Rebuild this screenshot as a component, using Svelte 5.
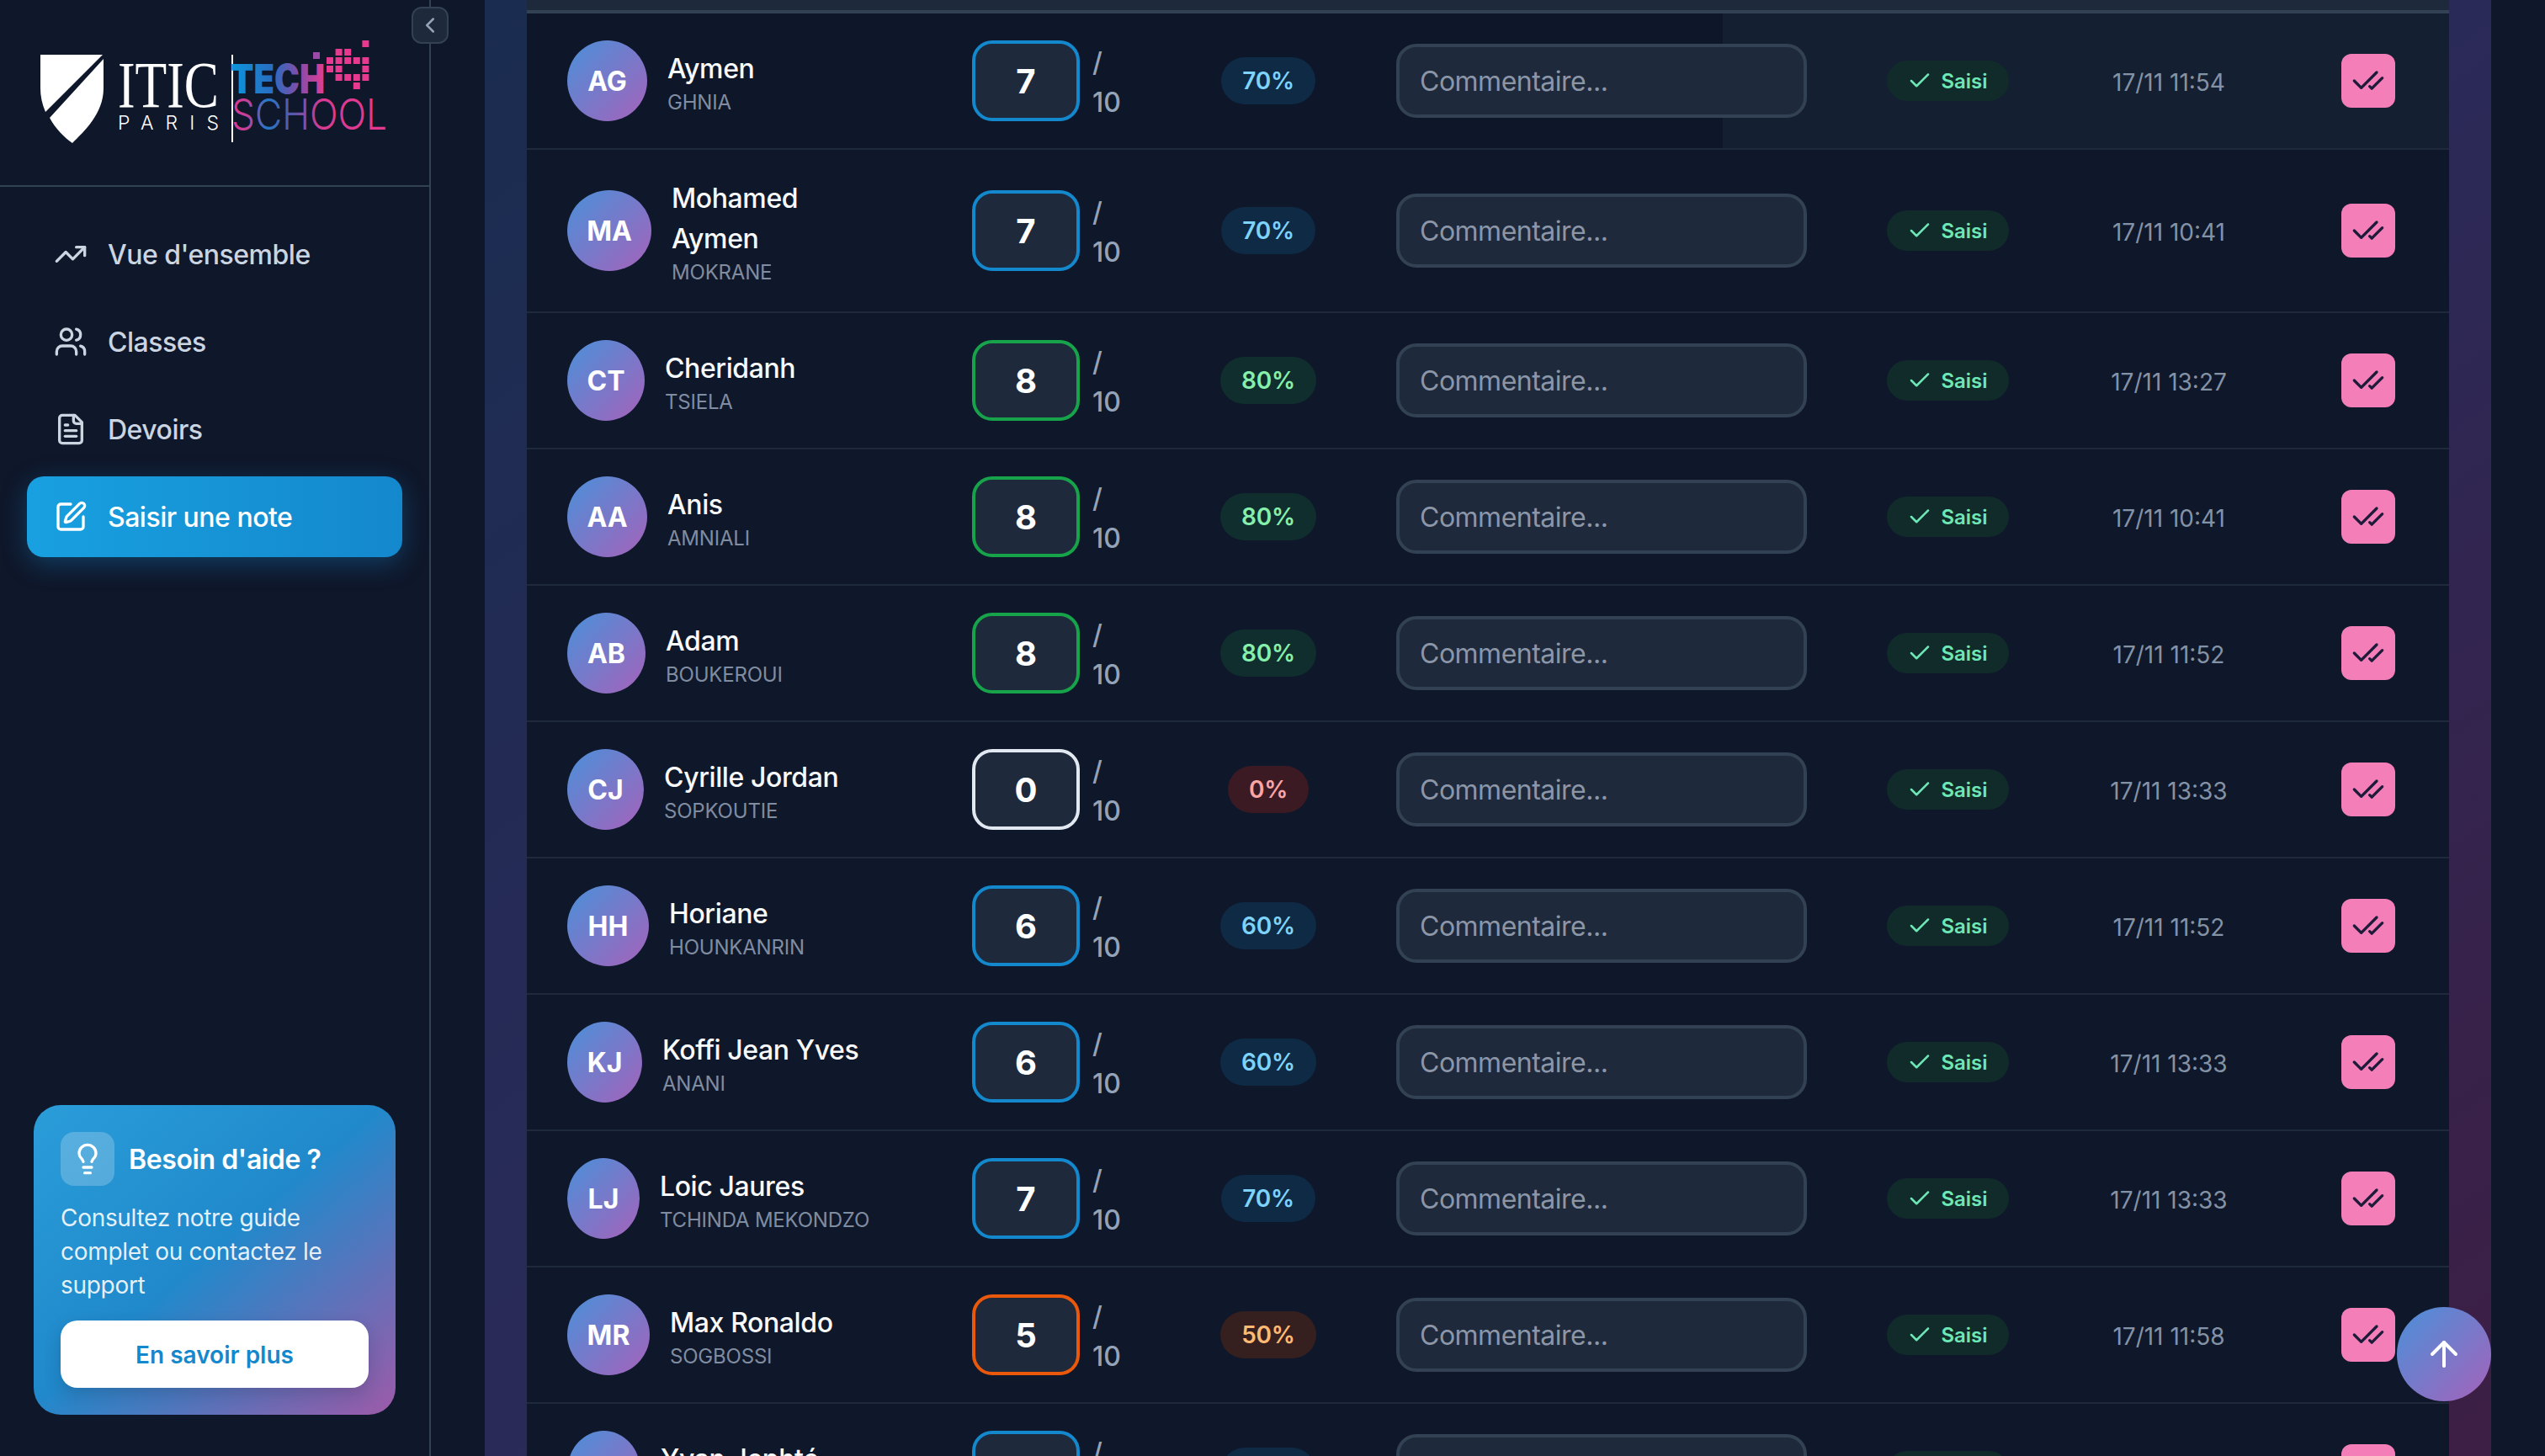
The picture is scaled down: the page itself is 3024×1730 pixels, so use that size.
<script>
	const nav = [
		{ label: "Vue d'ensemble", icon: 'trend' },
		{ label: 'Classes', icon: 'users' },
		{ label: 'Devoirs', icon: 'file' },
		{ label: 'Saisir une note', icon: 'pen', active: true }
	];

	const students = [
		{ ini: 'AG', first: 'Aymen', last: 'GHNIA', note: 7, w: 95, time: '17/11 11:54' },
		{ ini: 'MA', first: 'Mohamed Aymen', last: 'MOKRANE', note: 7, w: 100, time: '17/11 10:41' },
		{ ini: 'CT', first: 'Cheridanh', last: 'TSIELA', note: 8, w: 92, time: '17/11 13:27' },
		{ ini: 'AA', first: 'Anis', last: 'AMNIALI', note: 8, w: 95, time: '17/11 10:41' },
		{ ini: 'AB', first: 'Adam', last: 'BOUKEROUI', note: 8, w: 93, time: '17/11 11:52' },
		{ ini: 'CJ', first: 'Cyrille Jordan', last: 'SOPKOUTIE', note: 0, w: 91, time: '17/11 13:33' },
		{ ini: 'HH', first: 'Horiane', last: 'HOUNKANRIN', note: 6, w: 97, time: '17/11 11:52' },
		{ ini: 'KJ', first: 'Koffi Jean Yves', last: 'ANANI', note: 6, w: 89, time: '17/11 13:33' },
		{ ini: 'LJ', first: 'Loic Jaures', last: 'TCHINDA MEKONDZO', note: 7, w: 86, time: '17/11 13:33' },
		{ ini: 'MR', first: 'Max Ronaldo', last: 'SOGBOSSI', note: 5, w: 98, time: '17/11 11:58' },
		{ ini: 'YJ', first: 'Yvan Jephté', last: '\u00a0', note: 7, w: 87, time: '' }
	];

	const tone = (note) => {
		if (note >= 8) return 'good';
		if (note >= 6) return 'mid';
		if (note >= 5) return 'warn';
		return 'bad';
	};

	const pixels = [
		[4, 0],
		[1, 1], [2, 1],
		[0, 2], [1, 2], [2, 2], [3, 2], [4, 2],
		[0, 3], [1, 3], [4, 3],
		[1, 4], [2, 4], [3, 4], [4, 4],
		[3, 5]
	];
</script>

<div class="page">
	<aside>
		<button class="collapse" type="button" aria-label="Replier">
			<svg viewBox="0 0 24 24" width="30" height="30"><path d="m15 18-6-6 6-6" /></svg>
		</button>

		<div class="brand">
			<svg class="logo" viewBox="0 0 510 220" width="510" height="220">
				<defs>
					<linearGradient id="tech" gradientUnits="userSpaceOnUse" x1="276" y1="0" x2="385" y2="0">
						<stop offset="0" stop-color="#0c95dc" />
						<stop offset="0.45" stop-color="#2a6cc0" />
						<stop offset="0.75" stop-color="#8c4aa8" />
						<stop offset="1" stop-color="#e23c92" />
					</linearGradient>
					<linearGradient id="school" gradientUnits="userSpaceOnUse" x1="276" y1="0" x2="459" y2="0">
						<stop offset="0" stop-color="#e0358f" />
						<stop offset="0.1" stop-color="#c0429a" />
						<stop offset="0.22" stop-color="#2478c6" />
						<stop offset="0.4" stop-color="#5a55ac" />
						<stop offset="0.58" stop-color="#d83a92" />
						<stop offset="1" stop-color="#e6398f" />
					</linearGradient>
				</defs>
				<path class="white" d="M48 65H122L54 133C50 124 48 114 48 105Z" />
				<path class="white" d="M123 70V105C123 135 100 156 86 170C76 163 66 153 59 140Z" />
				<text class="itic" x="140" y="127" textLength="120" lengthAdjust="spacingAndGlyphs">ITIC</text>
				<text class="paris" x="140" y="154" textLength="120">PARIS</text>
				<rect class="white" x="275" y="65" width="2" height="104" />
				<text class="techword" x="274" y="111" textLength="112" lengthAdjust="spacingAndGlyphs" fill="url(#tech)">TECH</text>
				<text class="schoolword" x="275" y="154" textLength="185" lengthAdjust="spacingAndGlyphs" fill="url(#school)">SCHOOL</text>
				<rect x="372" y="62" width="8" height="8" fill="#9a4aa6" />
				{#each pixels as [c, r]}
					<rect x={388 + c * 10.6} y={48 + r * 10} width="8" height="8" fill="#e6398f" />
				{/each}
			</svg>
		</div>

		<nav>
			{#each nav as item}
				<div class="nav-item" class:active={item.active}>
					<svg viewBox="0 0 24 24" width="40" height="40">
						{#if item.icon === 'trend'}
							<polyline points="22 7 13.5 15.5 8.5 10.5 2 17" />
							<polyline points="16 7 22 7 22 13" />
						{:else if item.icon === 'users'}
							<path d="M16 21v-2a4 4 0 0 0-4-4H6a4 4 0 0 0-4 4v2" />
							<circle cx="9" cy="7" r="4" />
							<path d="M22 21v-2a4 4 0 0 0-3-3.87" />
							<path d="M16 3.13a4 4 0 0 1 0 7.75" />
						{:else if item.icon === 'file'}
							<path d="M15 2H6a2 2 0 0 0-2 2v16a2 2 0 0 0 2 2h12a2 2 0 0 0 2-2V7Z" />
							<path d="M14 2v4a2 2 0 0 0 2 2h4" />
							<path d="M10 9H8" />
							<path d="M16 13H8" />
							<path d="M16 17H8" />
						{:else}
							<path d="M12 3H5a2 2 0 0 0-2 2v14a2 2 0 0 0 2 2h14a2 2 0 0 0 2-2v-7" />
							<path d="M18.375 2.625a1 1 0 0 1 3 3l-9.013 9.014a2 2 0 0 1-.853.505l-2.873.84a.5.5 0 0 1-.62-.62l.84-2.873a2 2 0 0 1 .506-.852z" />
						{/if}
					</svg>
					<span>{item.label}</span>
				</div>
			{/each}
		</nav>

		<div class="help">
			<div class="help-head">
				<span class="bulb">
					<svg viewBox="0 0 24 24" width="40" height="40">
						<path d="M15 14c.2-1 .7-1.7 1.5-2.5 1-.9 1.5-2.2 1.5-3.5A6 6 0 0 0 6 8c0 1 .2 2.2 1.5 3.5.7.7 1.3 1.5 1.5 2.5" />
						<path d="M9 18h6" />
						<path d="M10 22h4" />
					</svg>
				</span>
				<h3>Besoin d'aide ?</h3>
			</div>
			<p>Consultez notre guide complet ou contactez le support</p>
			<button type="button" class="more">En savoir plus</button>
		</div>
	</aside>

	<main>
		<div class="panel">
			<div class="thead"></div>
			{#each students as s, i}
				<div class="row" class:hovered={i === 0}>
					<div class="student">
						<span class="avatar" style="width: {s.w}px">{s.ini}</span>
						<div class="who">
							<div class="first">{s.first}</div>
							<div class="last">{s.last}</div>
						</div>
					</div>
					<div class="score">
						<input class="note {tone(s.note)}" type="text" value={s.note} />
						<span class="max">/ 10</span>
					</div>
					<div class="pct-cell">
						<span class="pct {tone(s.note)}">{s.note * 10}%</span>
					</div>
					<div class="comment">
						<input type="text" placeholder="Commentaire..." />
					</div>
					<div class="status">
						<span class="saved">
							<svg viewBox="0 0 24 24" width="30" height="30"><path d="M20 6 9 17l-5-5" /></svg>
							Saisi
						</span>
					</div>
					<div class="time">{s.time}</div>
					<div class="action">
						<button type="button" aria-label="Valider">
							<svg viewBox="0 0 24 24" width="40" height="40">
								<path d="M18 6 7 17l-5-5" />
								<path d="m22 10-7.5 7.5L13 16" />
							</svg>
						</button>
					</div>
				</div>
			{/each}
		</div>
	</main>

	<button class="to-top" type="button" aria-label="Haut de page">
		<svg viewBox="0 0 24 24" width="48" height="48">
			<path d="m5 12 7-7 7 7" />
			<path d="M12 19V5" />
		</svg>
	</button>
</div>

<style>
	:global(body) {
		margin: 0;
		background: #0f172a;
	}

	.page {
		position: relative;
		display: flex;
		height: 1730px;
		overflow: hidden;
		background: #0f172a;
		color: #f1f5f9;
		font-family: Inter, 'Noto Sans', sans-serif;
	}

	svg {
		display: block;
		flex-shrink: 0;
		fill: none;
		stroke: currentColor;
		stroke-width: 2;
		stroke-linecap: round;
		stroke-linejoin: round;
	}

	aside {
		position: relative;
		display: flex;
		flex-direction: column;
		flex-shrink: 0;
		width: 510px;
		border-right: 2px solid #334155;
	}

	.collapse {
		position: absolute;
		top: 8px;
		right: -23px;
		display: grid;
		place-items: center;
		width: 44px;
		height: 44px;
		padding: 0;
		border: 2px solid #334155;
		border-radius: 12px;
		background: #1e293b;
		color: #94a3b8;
	}

	.brand {
		height: 220px;
		border-bottom: 2px solid #334155;
	}

	.logo {
		stroke: none;
		stroke-width: 0;
	}

	.logo text {
		stroke: none;
	}

	.white {
		fill: #fff;
	}

	.itic {
		fill: #fff;
		font-family: 'Liberation Serif', serif;
		font-size: 78px;
	}

	.paris {
		fill: #fff;
		font-family: Inter, sans-serif;
		font-size: 23px;
		font-weight: 300;
	}

	.techword {
		font-family: Inter, sans-serif;
		font-size: 48px;
		font-weight: 900;
	}

	.schoolword {
		font-family: Inter, sans-serif;
		font-size: 51px;
		font-weight: 300;
	}

	nav {
		display: flex;
		flex-direction: column;
		gap: 8px;
		padding: 32px 32px 0;
	}

	.nav-item {
		display: flex;
		align-items: center;
		gap: 24px;
		height: 96px;
		padding-left: 32px;
		border-radius: 20px;
		color: #cbd5e1;
		font-size: 32px;
		font-weight: 500;
		letter-spacing: -0.5px;
	}

	.nav-item.active {
		background: linear-gradient(90deg, #18a0e0, #1488cc);
		box-shadow: 0 8px 30px rgba(20, 136, 204, 0.35);
		color: #fff;
	}

	.help {
		margin: auto 40px 49px;
		padding: 32px;
		border-radius: 32px;
		background: linear-gradient(to bottom right, #2a9dd9 0%, #2089cb 48%, #9d5aa8 100%);
		color: #fff;
	}

	.help-head {
		display: flex;
		align-items: center;
		gap: 17px;
	}

	.bulb {
		display: grid;
		place-items: center;
		width: 64px;
		height: 64px;
		border-radius: 16px;
		background: rgba(255, 255, 255, 0.22);
	}

	h3 {
		margin: 0;
		font-size: 32px;
		font-weight: 600;
		letter-spacing: -0.4px;
	}

	.help p {
		margin: 18px 0 22px;
		font-size: 28px;
		line-height: 40px;
		letter-spacing: -0.3px;
		color: rgba(255, 255, 255, 0.9);
	}

	.more {
		display: block;
		width: 100%;
		height: 80px;
		padding: 2px 0 0;
		border: 0;
		border-radius: 20px;
		background: #fff;
		box-shadow: 0 8px 20px rgba(15, 23, 42, 0.18);
		color: #1488cc;
		font-family: inherit;
		font-size: 28px;
		font-weight: 600;
	}

	main {
		flex: 1;
		min-width: 0;
		padding: 0 64px;
	}

	.panel {
		height: 100%;
		padding: 0 50px;
		background: linear-gradient(to bottom right, #1a2c50, #2a2a58 50%, #3d1e44);
	}

	.thead {
		height: 12px;
		border-bottom: 4px solid #334155;
		background: #1e293b;
	}

	.row {
		display: grid;
		grid-template-columns: 529px 245px 214px 532px 337px 188px 239px;
		align-items: center;
		padding: 32px 0;
		border-bottom: 2px solid #1e293b;
		background: #0f172a;
	}

	.row.hovered {
		background: linear-gradient(90deg, #0e1629 1421px, #141f31 1421px);
	}

	.student {
		display: flex;
		align-items: center;
		gap: 24px;
		padding-left: 48px;
	}

	.avatar {
		display: grid;
		place-items: center;
		flex-shrink: 0;
		height: 96px;
		border-radius: 50%;
		background: linear-gradient(135deg, #4a90d9, #a562ba);
		color: #fff;
		font-size: 32px;
		font-weight: 700;
	}

	.who {
		margin: 2px 0 -2px;
	}

	.first {
		max-width: 240px;
		font-size: 32px;
		font-weight: 500;
		line-height: 48px;
		letter-spacing: -0.4px;
		color: #f8fafc;
	}

	.last {
		font-size: 24px;
		line-height: 32px;
		letter-spacing: -0.2px;
		color: #808ca0;
		white-space: nowrap;
	}

	.score {
		display: flex;
		align-items: center;
		gap: 15px;
	}

	.note {
		box-sizing: border-box;
		flex-shrink: 0;
		width: 128px;
		height: 96px;
		padding: 0;
		border: 4px solid #1488cc;
		border-radius: 24px;
		outline: none;
		background: #1e293b;
		color: #fff;
		font-family: inherit;
		font-size: 40px;
		font-weight: 700;
		text-align: center;
	}

	.note.good {
		border-color: #16a34a;
	}

	.note.warn {
		border-color: #ea580c;
	}

	.note.bad {
		border-color: #e2e8f0;
	}

	.max {
		width: 50px;
		margin: 2px 0 -2px;
		font-size: 32px;
		font-weight: 500;
		line-height: 48px;
		color: #94a3b8;
	}

	.pct-cell,
	.status,
	.time {
		display: flex;
		justify-content: center;
	}

	.pct {
		padding: 1px 25px 0;
		border-radius: 28px;
		font-size: 28px;
		font-weight: 600;
		line-height: 55px;
		letter-spacing: -0.2px;
	}

	.pct.mid {
		background: #0f2a44;
		color: #7dd3fc;
	}

	.pct.good {
		background: #0f2e2d;
		color: #86efac;
	}

	.pct.warn {
		background: #35201f;
		color: #fdba74;
	}

	.pct.bad {
		background: #3b1a24;
		color: #fca5a5;
	}

	.comment {
		padding-left: 45px;
	}

	.comment input {
		box-sizing: border-box;
		display: block;
		width: 488px;
		height: 88px;
		padding: 1px 24px 0;
		border: 4px solid #334155;
		border-radius: 24px;
		outline: none;
		background: #1e293b;
		color: #f1f5f9;
		font-family: inherit;
		font-size: 32px;
		letter-spacing: -0.5px;
	}

	.comment input::placeholder {
		color: #8b96a8;
		opacity: 1;
	}

	.saved {
		display: flex;
		align-items: center;
		gap: 10px;
		height: 48px;
		padding: 0 25px 0 24px;
		border-radius: 24px;
		background: #112b2a;
		color: #6ee7b7;
		font-size: 24px;
		font-weight: 600;
	}

	.time {
		margin: 2px 0 -2px;
		font-size: 28px;
		color: #8492a6;
	}

	.action {
		display: flex;
		justify-content: flex-end;
		padding-right: 64px;
	}

	.action button {
		display: grid;
		place-items: center;
		width: 64px;
		height: 64px;
		padding: 0;
		border: 0;
		border-radius: 12px;
		background: #f47fb8;
		color: #1e1b3a;
	}

	.to-top {
		position: absolute;
		right: 64px;
		bottom: 65px;
		display: grid;
		place-items: center;
		width: 112px;
		height: 112px;
		padding: 0;
		border: 0;
		border-radius: 50%;
		background: linear-gradient(135deg, #4a90d9, #a562ba);
		color: #fff;
	}
</style>
